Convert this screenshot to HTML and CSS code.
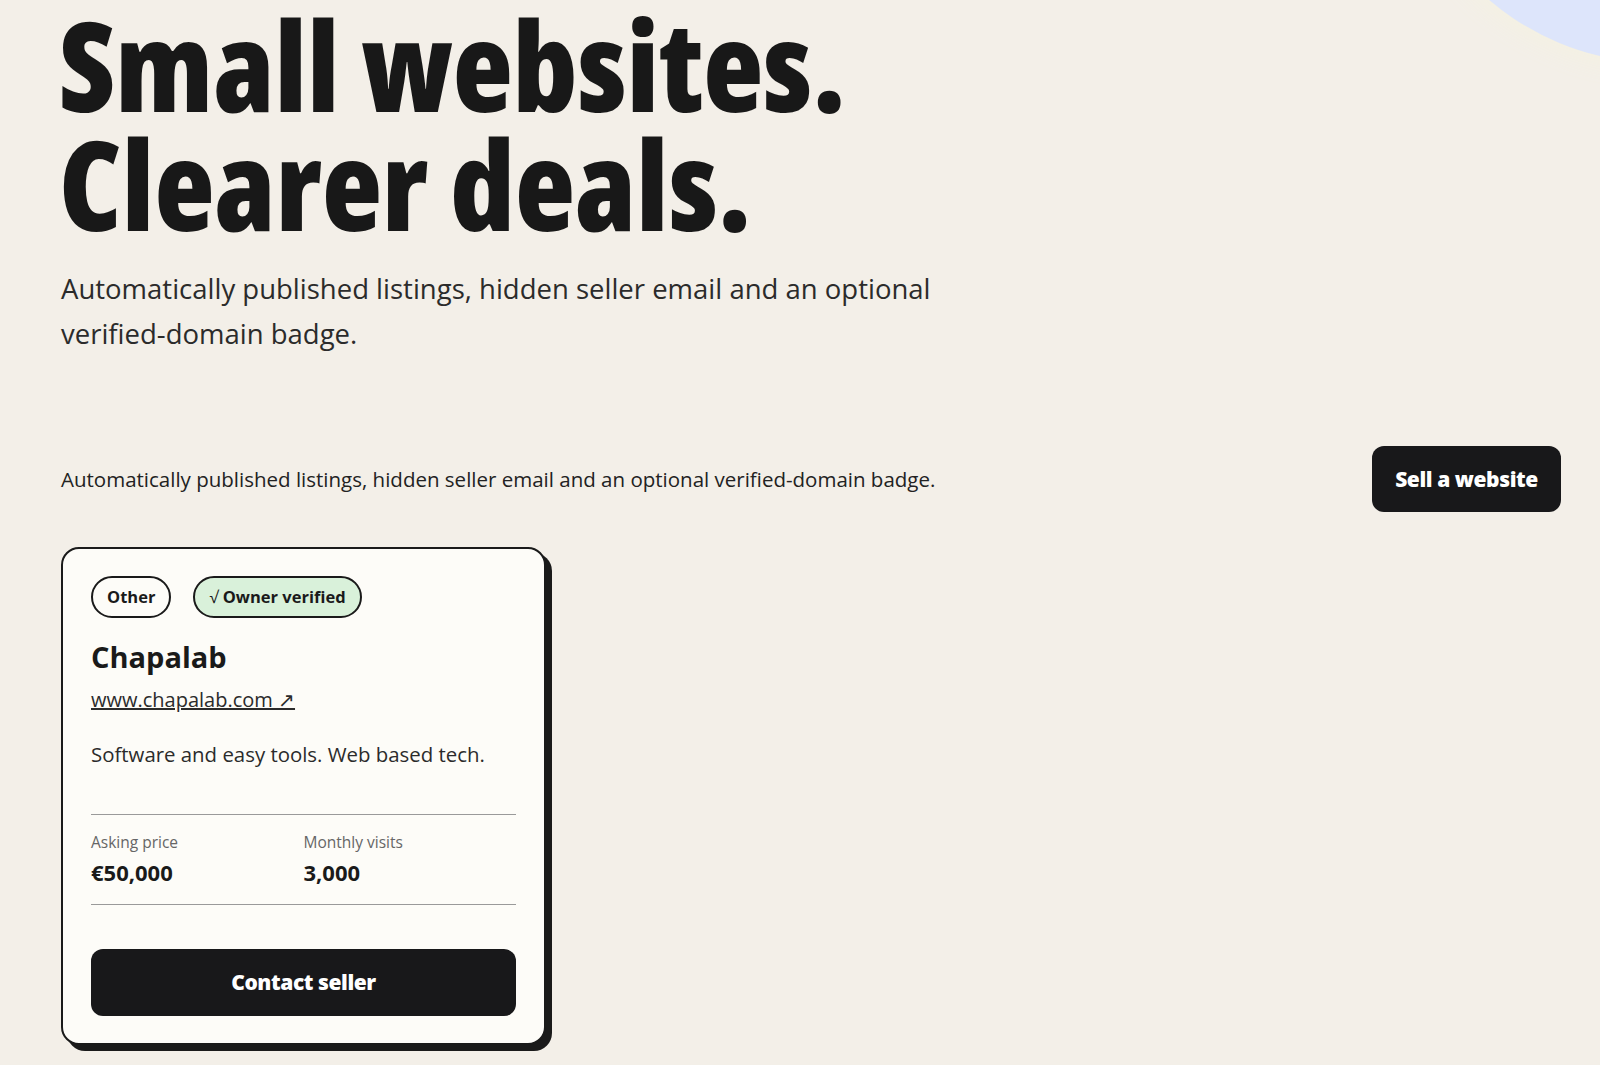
FILE: index.html
```html
<!DOCTYPE html>
<html lang="en">
<head>
    <meta charset="UTF-8">
    <meta name="viewport" content="width=device-width, initial-scale=1.0">
    <title>Small websites. Clearer deals.</title>
    <link rel="stylesheet" href="styles.css">
</head>
<body>

    <!-- Decorative blob -->
    <div class="blob"></div>

    <main class="page">

        <!-- Hero -->
        <section class="hero">
            <h1>Small websites.<br>Clearer deals.</h1>
            <p class="lead">Automatically published listings, hidden seller email and an optional verified-domain badge.</p>
        </section>

        <!-- Listings -->
        <section class="listings">
            <div class="listings-head">
                <p>Automatically published listings, hidden seller email and an optional verified-domain badge.</p>
                <a href="#" class="btn btn-sell">Sell a website</a>
            </div>

            <div class="listing-grid">
                <article class="card">
                    <div class="tags">
                        <span class="tag">Other</span>
                        <span class="tag tag-verified"><span class="tick">&#8730;</span> Owner verified</span>
                    </div>
                    <h2 class="card-title">Chapalab</h2>
                    <a href="#" class="card-link">www.chapalab.com &#8599;</a>
                    <p class="card-desc">Software and easy tools. Web based tech.</p>

                    <div class="stats">
                        <div class="stat">
                            <span class="stat-label">Asking price</span>
                            <span class="stat-value">&euro;50,000</span>
                        </div>
                        <div class="stat">
                            <span class="stat-label">Monthly visits</span>
                            <span class="stat-value">3,000</span>
                        </div>
                    </div>

                    <a href="#" class="btn btn-contact">Contact seller</a>
                </article>
            </div>
        </section>

    </main>

</body>
</html>
```

FILE: styles.css
```css
* {
    box-sizing: border-box;
    margin: 0;
    padding: 0;
}
body {
    font-family: "Open Sans", "Noto Sans", sans-serif;
    background-color: #f3efe8;
    color: #1a1a1a;
    overflow: hidden;
    position: relative;
    min-height: 100vh;
}
a {
    color: inherit;
}
.blob {
    position: absolute;
    left: 1397px;
    top: -463px;
    width: 526px;
    height: 526px;
    border-radius: 50%;
    background-color: #dde5fb;
    box-shadow: 0 0 24px 6px #f4f1e2;
}
.page {
    position: relative;
    padding: 0 39px 0 61px;
}

/* Hero */
.hero {
    padding-top: 4px;
}
.hero h1 {
    font-size: 124px;
    font-weight: 800;
    font-stretch: 87.5%;
    line-height: 119px;
    letter-spacing: 0;
    color: #181818;
    margin-left: -2px;
}
.lead {
    max-width: 960px;
    margin-top: 24px;
    font-size: 27.5px;
    line-height: 45px;
    color: #2b2b2b;
}

/* Listings */
.listings {
    margin-top: 90px;
}
.listings-head {
    display: flex;
    justify-content: space-between;
    align-items: center;
}
.listings-head p {
    font-size: 20.5px;
    color: #222;
}
.btn {
    display: flex;
    justify-content: center;
    align-items: center;
    background-color: #18181a;
    color: white;
    text-decoration: none;
    font-weight: 800;
    font-size: 21px;
    border-radius: 12px;
    letter-spacing: -0.02em;
}
.btn-sell {
    width: 189px;
    height: 66px;
}
.listing-grid {
    margin-top: 35px;
    display: grid;
    grid-template-columns: 485px;
}

/* Card */
.card {
    background-color: #fdfcf8;
    border: 2px solid #1a1a1a;
    border-radius: 18px;
    box-shadow: 6px 6px 0 #1a1a1a;
    padding: 27px 28px 27px;
}
.tags {
    display: flex;
    gap: 22px;
}
.tag {
    display: inline-block;
    border: 2px solid #1a1a1a;
    border-radius: 999px;
    padding: 0 14px;
    height: 42px;
    line-height: 38px;
    font-size: 16.5px;
    font-weight: 700;
}
.tag-verified {
    background-color: #d9f1da;
}
.tick {
    font-weight: 400;
}
.card-title {
    margin-top: 20px;
    font-size: 29px;
    font-weight: 700;
    line-height: 1.3;
}
.card-link {
    display: inline-block;
    margin-top: 10px;
    font-size: 20px;
    color: #2b2b2b;
}
.card-desc {
    margin-top: 27px;
    font-size: 20.4px;
    color: #2b2b2b;
}
.stats {
    margin-top: 46px;
    border-top: 1px solid #9a9a9a;
    border-bottom: 1px solid #9a9a9a;
    padding: 16px 0 17px;
    display: grid;
    grid-template-columns: 1fr 1fr;
}
.stat {
    display: flex;
    flex-direction: column;
    gap: 4px;
}
.stat-label {
    font-size: 15.5px;
    color: #666;
}
.stat-value {
    font-size: 22px;
    font-weight: 700;
}
.btn-contact {
    margin-top: 44px;
    height: 67px;
}
```
